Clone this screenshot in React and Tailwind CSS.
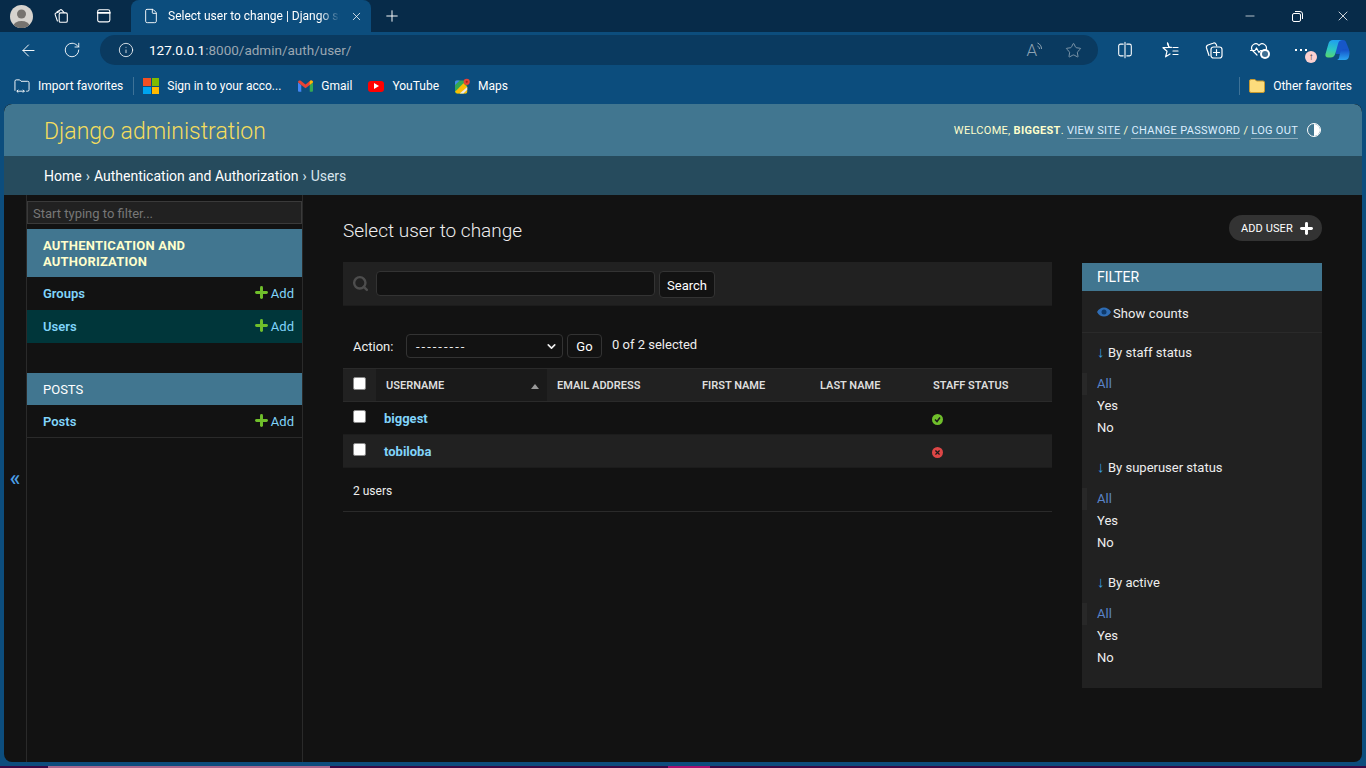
import React from 'react';
import { ArrowLeft, RotateCw, Info, Star, Plus, X, Minus, File, ChevronDown, Search } from 'lucide-react';

const font = { fontFamily: 'Roboto, "Noto Sans", sans-serif' };

function FakeIcon({ children, size = 20 }) {
  return (
    <svg width={size} height={size} viewBox="0 0 20 20" fill="none" stroke="currentColor" strokeWidth="1.2" strokeLinecap="round" strokeLinejoin="round">
      {children}
    </svg>
  );
}

function TabBar() {
  return (
    <div className="flex h-8 shrink-0 items-center bg-[#072b49] text-white">
      <div className="ml-[10px] flex h-[23px] w-[23px] items-end justify-center overflow-hidden rounded-full bg-[#d6d3ce]">
        <svg width="23" height="23" viewBox="0 0 23 23">
          <circle cx="11.5" cy="9" r="4.5" fill="#76736f" />
          <ellipse cx="11.5" cy="21" rx="8" ry="5" fill="#76736f" />
        </svg>
      </div>
      <div className="ml-[19px] text-white">
        <FakeIcon size={18}>
          <rect x="8" y="6.500" width="9" height="10.500" rx="1.500" />
          <path d="M6 15.500 3.500 8.500a1.500 1.500 0 0 1 .9-1.900L8 5.200" />
          <path d="M5.500 5.500 9 3.300a1.500 1.500 0 0 1 2 .2l2.500 2.800" />
        </FakeIcon>
      </div>
      <div className="ml-[25px]">
        <FakeIcon size={18}>
          <rect x="3" y="3" width="13.500" height="13.500" rx="2" />
          <path d="M3 6.500h13.500" strokeWidth="2" />
        </FakeIcon>
      </div>
      <div className="ml-[18px] flex h-8 w-[240px] items-center rounded-t-lg bg-[#0c4d7d] pl-[12px]">
        <File size={16} strokeWidth={1.4} />
        <span className="ml-[9px] w-[172px] overflow-hidden whitespace-nowrap text-[12px] [mask-image:linear-gradient(to_right,black_88%,transparent)]">
          Select user to change | Django site admin
        </span>
        <X size={13} strokeWidth={1.4} className="ml-[10px]" />
      </div>
      <Plus size={18} strokeWidth={1.3} className="ml-[12px]" />
      <div className="ml-auto flex items-center pr-[15px]">
        <Minus size={14} strokeWidth={1.2} />
        <svg width="11" height="11" viewBox="0 0 11 11" fill="none" stroke="currentColor" className="ml-[35px]">
          <rect x="0.5" y="2.5" width="8" height="8" rx="1.5" />
          <path d="M3 .5h5a2.5 2.5 0 0 1 2.5 2.5v5" />
        </svg>
        <X size={16} strokeWidth={1.2} className="ml-[32px]" />
      </div>
    </div>
  );
}

function ToolSlot({ children, className = '' }) {
  return <div className={`relative flex w-[44.5px] shrink-0 items-center justify-center ${className}`}>{children}</div>;
}

function Toolbar() {
  return (
    <div className="flex h-9 shrink-0 items-center bg-[#0c4d7d] text-white">
      <ArrowLeft size={19} strokeWidth={1.2} className="ml-[19px]" />
      <RotateCw size={18} strokeWidth={1.2} className="ml-[25px]" />
      <div className="ml-[19px] flex h-[30px] w-[998px] items-center rounded-full bg-[#0a3a60] pl-[18px]">
        <Info size={16} strokeWidth={1.2} />
        <span className="ml-[15px] pt-[1px] text-[13.5px]">
          127.0.0.1<span className="text-[#9aa7b2]">:8000/admin/auth/user/</span>
        </span>
        <div className="ml-auto flex items-center pr-[16px] text-[#8ea3b3]">
          <span className="text-[17px] font-light leading-none">A</span>
          <svg width="6" height="12" viewBox="0 0 6 12" fill="none" stroke="currentColor" className="mb-1">
            <path d="M.5 1c2.500 1 4 3 4 6M.5 4c1 .5 2 1.500 2 3" />
          </svg>
          <Star size={17} strokeWidth={1.2} className="ml-[22px]" />
        </div>
      </div>
      <ToolSlot className="ml-[5px]">
        <FakeIcon size={18}>
          <path d="M8 3.500H5a2 2 0 0 0-2 2v9a2 2 0 0 0 2 2h3M12 3.500h3a2 2 0 0 1 2 2v9a2 2 0 0 1-2 2h-3M10 1.500v17" />
        </FakeIcon>
      </ToolSlot>
      <ToolSlot>
        <FakeIcon>
          <path d="M7.500 3 9 7.300l-6 .4 4 3.600-1.400 5.500 4.400-2.800" />
          <path d="M7.500 3 9 7.300h2.500M13 7.500h5M13 11h5M13 14.500h5" />
        </FakeIcon>
      </ToolSlot>
      <ToolSlot>
        <FakeIcon>
          <path d="M5 15.500 2.500 8A2.500 2.500 0 0 1 4 5l5-1.800a2.500 2.500 0 0 1 3.200 1.200l.5 1.500" />
          <rect x="7" y="7" width="11" height="11" rx="2.500" />
          <path d="M12.500 9.500v6M9.500 12.500h6" />
        </FakeIcon>
      </ToolSlot>
      <ToolSlot>
        <div className="relative h-5 w-5">
          <FakeIcon>
            <path d="M17 10c2-4.500-4-9-7-4.500C7 1 1 5.500 3 10l5 5" />
            <path d="M1.500 10.500h4.500L7.500 8l2.500 4.500 1.500-2h3" />
          </FakeIcon>
          <span className="absolute bottom-[1px] right-[-1px] flex h-[10px] w-[10px] items-center justify-center rounded-full bg-white">
            <span className="h-[6px] w-[6px] rounded-full bg-[#3f6f92]" />
          </span>
        </div>
      </ToolSlot>
      <ToolSlot>
        <div className="relative flex w-[16px] gap-[3px]">
          <span className="h-[2px] w-[2px] bg-white" />
          <span className="h-[2px] w-[2px] bg-white" />
          <span className="h-[2px] w-[2px] bg-white" />
          <span className="absolute left-[10px] top-[2px] flex h-[12px] w-[12px] items-center justify-center rounded-full bg-[#fbd0d0] text-[10px] font-bold leading-none text-[#222]">↑</span>
        </div>
      </ToolSlot>
      <svg width="25" height="22" viewBox="0 0 25 22" className="ml-[-1px]">
        <defs>
          <linearGradient id="cp1" x1="0.5" y1="0" x2="0.3" y2="1">
            <stop offset="0" stopColor="#1f9ff0" />
            <stop offset="0.55" stopColor="#2cc7c4" />
            <stop offset="1" stopColor="#58d66f" />
          </linearGradient>
          <linearGradient id="cp2" x1="0.5" y1="0" x2="0.5" y2="1">
            <stop offset="0" stopColor="#1450c8" />
            <stop offset="1" stopColor="#2aa5f2" />
          </linearGradient>
        </defs>
        <path d="M9 1h9c1.500 0 2.500.7 3 2l3 7.500c.8 2.500-.2 4.500-2 4.500H11z" fill="#1757c9" />
        <path d="M8 1h9c-2.500.3-3.500 2-4 4l-2.500 9c-.8 3-2.300 4.500-5 4.500H3c-2 0-3-1.500-2.500-3.500l3-10.500C4.200 2.200 5.500 1 8 1z" fill="url(#cp1)" />
        <path d="M12 21h8c2.500 0 3.500-1.500 4-3.500l.5-3c.4-2.500-1-4-3-4h-3.500c-1.500 0-2.200 1-2.600 2.400l-1 4C14.200 19 13.500 20.500 12 21z" fill="url(#cp2)" />
      </svg>
    </div>
  );
}

function Bookmark({ icon, label, className = '' }) {
  return (
    <div className={`flex items-center gap-[8px] text-[12px] text-white ${className}`}>
      {icon}
      <span>{label}</span>
    </div>
  );
}

function BookmarksBar() {
  return (
    <div className="flex h-9 shrink-0 items-center bg-[#0c4d7d] pl-[14px] pr-[14px]">
      <Bookmark
        label="Import favorites"
        icon={
          <svg width="16" height="16" viewBox="0 0 17 16" fill="none" stroke="white" strokeWidth="1">
            <path d="M1 13V3a1.500 1.500 0 0 1 1.500-1.500H6l1.500 1.500h7A1.500 1.500 0 0 1 16 4.500V12a1.500 1.500 0 0 1-1.500 1.500H13" />
            <path d="M3 13.500h8M4.500 12 3 13.500 4.500 15M9.500 12l1.500 1.500L9.500 15" />
          </svg>
        }
      />
      <div className="ml-[10px] h-[18px] w-px bg-[#3e7297]" />
      <Bookmark
        className="ml-[9px]"
        label="Sign in to your acco..."
        icon={
          <span className="grid h-4 w-4 grid-cols-2 gap-px">
            <span className="bg-[#f25022]" />
            <span className="bg-[#7fba00]" />
            <span className="bg-[#00a4ef]" />
            <span className="bg-[#ffb900]" />
          </span>
        }
      />
      <Bookmark
        className="ml-[17px]"
        label="Gmail"
        icon={
          <svg width="15" height="12" viewBox="0 0 16 12">
            <path d="M0 2v9a1 1 0 0 0 1 1h2.500V5z" fill="#4285f4" />
            <path d="M16 2v9a1 1 0 0 1-1 1h-2.500V5z" fill="#34a853" />
            <path d="M0 2c0-2 2-2.500 3-1.500L8 4.500 13 .5c1-1 3-.5 3 1.500l-3.500 3L8 8.500 3.500 5z" fill="#ea4335" />
            <path d="M13 .5c1-1 3-.5 3 1.500l-3.500 3V1z" fill="#fbbc04" />
          </svg>
        }
      />
      <Bookmark
        className="ml-[16px]"
        label="YouTube"
        icon={
          <span className="flex h-[11px] w-[16px] items-center justify-center rounded-[3px] bg-[#f00]">
            <span className="h-0 w-0 border-y-[3px] border-l-[5px] border-y-transparent border-l-white" />
          </span>
        }
      />
      <Bookmark
        className="ml-[16px]"
        label="Maps"
        icon={
          <svg width="15" height="16" viewBox="0 0 16 16">
            <rect x="0" y="2" width="13" height="14" rx="1.500" fill="#34a853" />
            <path d="M0 14 9 5l4 4v5.500a1.500 1.500 0 0 1-1.500 1.500H2z" fill="#fbbc04" />
            <path d="M0 7 5 2H2A2 2 0 0 0 0 4z" fill="#4285f4" />
            <path d="M5 16 13 9v3l-4 4z" fill="#e8eaed" />
            <circle cx="12.500" cy="3.500" r="3.300" fill="#ea4335" />
            <circle cx="12.500" cy="3.500" r="1.200" fill="#a52714" />
          </svg>
        }
      />
      <div className="ml-auto h-[18px] w-px bg-[#3e7297]" />
      <Bookmark
        className="ml-[9px]"
        label="Other favorites"
        icon={
          <svg width="16" height="14" viewBox="0 0 16 14">
            <path d="M.500 2A1.500 1.500 0 0 1 2 .5h4l1.500 1.500H14A1.500 1.500 0 0 1 15.500 3.500v8.500a1.500 1.500 0 0 1-1.500 1.500H2A1.500 1.500 0 0 1 .5 12z" fill="#fcdc7c" stroke="#c99a2e" />
          </svg>
        }
      />
    </div>
  );
}

function AdminHeader() {
  return (
    <>
      <div className="flex h-[52px] shrink-0 items-center justify-between rounded-t-lg bg-[#417690] pl-10 pr-[40px]">
        <span className="pt-[2px] text-[23px] font-light leading-none text-[#f5dd5d]">Django administration</span>
        <div className="flex items-center pt-[2px] text-[11px] uppercase tracking-[0.3px] text-[#ffc]">
          <span>Welcome, <strong className="font-bold">biggest</strong>.&nbsp;</span>
          <span className="border-b border-[#ffffff66] leading-[14px] text-[#ddeeff]">View site</span>
          <span>&nbsp;/&nbsp;</span>
          <span className="border-b border-[#ffffff66] leading-[14px] text-[#ddeeff]">Change password</span>
          <span>&nbsp;/&nbsp;</span>
          <span className="border-b border-[#ffffff66] leading-[14px] text-[#ddeeff]">Log out</span>
          <span className="ml-[9px] mr-[1px] mb-[2px] flex h-[14px] w-[14px] overflow-hidden rounded-full border border-white">
            <span className="w-1/2" />
            <span className="w-1/2 bg-white" />
          </span>
        </div>
      </div>
      <div className="flex h-[39px] shrink-0 items-center bg-[#264b5d] pl-10 pt-[2px] text-[14px] text-[#d8e6ee]">
        <span className="text-white">Home</span>
        <span className="mx-[4px]">›</span>
        <span className="text-white">Authentication and Authorization</span>
        <span className="mx-[4px]">›</span>
        <span>Users</span>
      </div>
    </>
  );
}

function SidebarRow({ name, active, border }) {
  return (
    <div className={`flex h-[33px] items-center justify-between pl-4 pr-2 text-[13px] ${active ? 'bg-[#00363a]' : ''} ${border ? 'border-b border-[#2a2a2a] pt-[1px]' : ''}`}>
      <span className="font-semibold text-[#81d4fa]">{name}</span>
      <span className="flex items-center text-[#81d4fa]">
        <Plus size={17} strokeWidth={4.2} className="mb-[3px] mr-[1px] text-[#70bf2b]" />
        Add
      </span>
    </div>
  );
}

function Sidebar() {
  return (
    <div className="flex w-[276px] shrink-0 flex-col border-r border-[#2a2a2a]">
      <div className="mb-[5px] mt-[6px] flex h-[23px] items-center border border-[#3a3a3a] bg-[#212121] pl-[5px] pt-[2px] text-[13px] text-[#777]">
        Start typing to filter...
      </div>
      <div className="flex h-[48px] items-center bg-[#417690] pl-4 pt-[2px] text-[13px] font-bold uppercase leading-4 tracking-[0.2px] text-[#ffc]">
        <span>
          Authentication and
          <br />
          Authorization
        </span>
      </div>
      <SidebarRow name="Groups" />
      <SidebarRow name="Users" active />
      <div className="mt-[30px] flex h-[32px] items-center bg-[#417690] pl-4 pt-[2px] text-[13px] uppercase text-white">Posts</div>
      <SidebarRow name="Posts" border />
    </div>
  );
}

function CheckBox() {
  return <span className="block h-[13px] w-[13px] rounded-[2px] border border-[#8a8a8a] bg-white" />;
}

const columns = [
  { label: 'Email address', w: 'w-[145px]' },
  { label: 'First name', w: 'w-[118px]' },
  { label: 'Last name', w: 'w-[113px]' },
  { label: 'Staff status', w: 'w-[129px]' },
];

function UserRow({ name, staff, shaded }) {
  return (
    <div className={`flex h-[33px] items-center border-b border-[#1c1c1c] ${shaded ? 'bg-[#212121]' : ''}`}>
      <div className="w-[41px] pl-[10px] pb-[3px]"><CheckBox /></div>
      <div className="w-[539px] pt-[2px] text-[13px] font-bold text-[#81d4fa]">{name}</div>
      <div className="w-[129px] pl-[9px] pt-[2px]">
        <span className={`flex h-[11px] w-[11px] items-center justify-center rounded-full ${staff ? 'bg-[#70bf2b]' : 'bg-[#dd4646]'}`}>
          {staff ? (
            <svg width="7" height="7" viewBox="0 0 7 7" fill="none" stroke="#1a1a1a" strokeWidth="1.500">
              <path d="M1 3.500 3 5.500 6 1.500" />
            </svg>
          ) : (
            <X size={7} strokeWidth={4} className="text-[#1a1a1a]" />
          )}
        </span>
      </div>
    </div>
  );
}

function ChangeList() {
  return (
    <div className="w-[709px]">
      <div className="flex h-[44px] items-center border-b border-[#1c1c1c] bg-[#212121] pl-[9px] pt-[2px]">
        <Search size={17} strokeWidth={3.4} className="mb-[2px] text-[#4d4d4d]" />
        <div className="ml-[7px] mb-[2px] h-[25px] w-[279px] rounded border border-[#333] bg-[#121212]" />
        <div className="ml-[4px] flex h-[27px] w-[56px] items-center justify-center rounded border border-[#333] bg-[#121212] pt-[3px] text-[13px] text-white">Search</div>
      </div>
      <div className="flex h-[62px] items-center pl-[10px] pt-[18px] text-[13px] text-[#eee]">
        <span className="w-[53px] pt-[2px]">Action:</span>
        <div className="flex h-[24px] w-[157px] items-center justify-between rounded border border-[#333] pl-[9px] pr-[4px] text-[13px] leading-none">
          <span className="tracking-[2px]">---------</span>
          <ChevronDown size={13} strokeWidth={3} />
        </div>
        <div className="ml-[4px] flex h-[24px] w-[35px] items-center justify-center rounded border border-[#333] pt-[1px] text-white">Go</div>
        <span className="mb-[3px] ml-[10px]">0 of 2 selected</span>
      </div>
      <div className="flex h-[34px] items-center border-y border-[#2a2a2a] bg-[#212121] text-[11px] font-semibold uppercase text-[#ddd]">
        <div className="w-[33px] pl-[10px] pb-[3px]"><CheckBox /></div>
        <div className="flex h-full w-[171px] items-center justify-between bg-[#1a1a1a] pl-[10px] pr-[8px] pt-[2px]">
          <span>Username</span>
          <span className="h-0 w-0 border-x-[4px] border-b-[5px] border-x-transparent border-b-[#999]" />
        </div>
        {columns.map(c => (
          <div key={c.label} className={`${c.w} pl-[10px] pt-[2px]`}>{c.label}</div>
        ))}
      </div>
      <UserRow name="biggest" staff />
      <UserRow name="tobiloba" shaded />
      <div className="flex h-[44px] items-center border-b border-[#2a2a2a] pl-[10px] pt-[2px] text-[12px] text-[#eee]">2 users</div>
    </div>
  );
}

function FilterGroup({ title }) {
  return (
    <div className="mb-[19px] pl-[15px]">
      <div className="h-[30px] text-[13px] leading-[20px] text-[#eee]">
        <span className="inline-block w-[11px] text-[15px] font-bold leading-none text-[#3aa0e0]">↓</span>{title}
      </div>
      <div className="relative flex h-[22px] items-center text-[13px] text-[#5a84c8]">
        <span className="absolute left-[-15px] top-0 h-[22px] w-[5px] bg-[#282828]" />
        All
      </div>
      <div className="flex h-[22px] items-center text-[13px] text-[#eee]">Yes</div>
      <div className="flex h-[22px] items-center text-[13px] text-[#eee]">No</div>
    </div>
  );
}

function FilterPanel() {
  return (
    <div className="mt-px h-[425px] w-[240px] bg-[#212121]">
      <div className="flex h-[28px] items-center bg-[#417690] pl-[15px] text-[14px] uppercase text-white">Filter</div>
      <div className="flex h-[42px] items-center border-b border-[#2a2a2a] pl-[15px] pt-[5px] text-[13px] tracking-[0.1px] text-[#eee]">
        <svg width="14" height="10" viewBox="0 0 14 10" className="mb-[5px] mr-[2px]">
          <path d="M0 5c3-6 11-6 14 0-3 6-11 6-14 0z" fill="#2f6db5" />
          <circle cx="7" cy="5" r="2.500" fill="#0f3a6b" />
        </svg>
        Show counts
      </div>
      <div className="h-[10px]" />
      <FilterGroup title="By staff status" />
      <FilterGroup title="By superuser status" />
      <FilterGroup title="By active" />
    </div>
  );
}

export default function App() {
  return (
    <div className="flex h-[768px] w-[1366px] flex-col overflow-hidden bg-[#0c4d7d]" style={font}>
      <TabBar />
      <Toolbar />
      <BookmarksBar />
      <div className="mx-1 flex h-[658px] shrink-0 flex-col overflow-hidden rounded-lg bg-[#121212]">
        <AdminHeader />
        <div className="flex min-h-0 flex-1">
          <div className="flex w-[23px] shrink-0 items-center justify-center border-r border-[#2a2a2a] pb-[2px] text-[22px] font-medium leading-none text-[#4c9fe6]">«</div>
          <Sidebar />
          <div className="flex-1 px-10">
            <div className="flex h-[67px] items-start justify-between pt-[20px]">
              <h1 className="pt-[4px] text-[19px] font-light leading-[24px] text-[#eee]">Select user to change</h1>
              <div className="flex h-[26px] w-[93px] items-center gap-[3px] rounded-full bg-[#333] pl-3 text-[11px] uppercase tracking-[0.1px] text-white">
                <span className="pt-[2px]">Add user</span>
                <Plus size={17} strokeWidth={4.2} className="ml-[2px]" />
              </div>
            </div>
            <div className="flex justify-between">
              <ChangeList />
              <FilterPanel />
            </div>
          </div>
        </div>
      </div>
      <div className="mt-[4px] flex h-[2px] bg-[#3a0a45]">
        <div className="ml-[48px] w-[282px] bg-[#a9688f]" />
        <div className="ml-[338px] w-[42px] bg-[#a8106f]" />
      </div>
    </div>
  );
}
